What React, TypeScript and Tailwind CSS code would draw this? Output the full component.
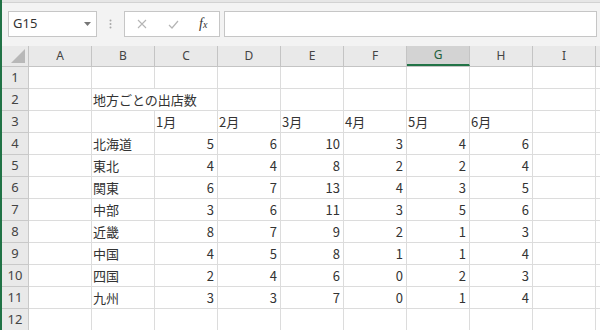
import React from 'react';

const COLS = ['A', 'B', 'C', 'D', 'E', 'F', 'G', 'H', 'I', ''];

const REGIONS: [string, number[]][] = [
  ['北海道', [5, 6, 10, 3, 4, 6]],
  ['東北', [4, 4, 8, 2, 2, 4]],
  ['関東', [6, 7, 13, 4, 3, 5]],
  ['中部', [3, 6, 11, 3, 5, 6]],
  ['近畿', [8, 7, 9, 2, 1, 3]],
  ['中国', [4, 5, 8, 1, 1, 4]],
  ['四国', [2, 4, 6, 0, 2, 3]],
  ['九州', [3, 3, 7, 0, 1, 4]],
];

type Cell = { text?: string | number; align?: 'left' | 'right'; spill?: boolean };

function buildRows(): Cell[][] {
  const rows: Cell[][] = [];
  const empty = () => COLS.map(() => ({} as Cell));
  rows.push(empty());
  const r2 = empty();
  r2[1] = { text: '地方ごとの出店数', spill: true };
  rows.push(r2);
  const r3 = empty();
  ['1月', '2月', '3月', '4月', '5月', '6月'].forEach((m, i) => (r3[i + 2] = { text: m }));
  rows.push(r3);
  REGIONS.forEach(([name, nums]) => {
    const r = empty();
    r[1] = { text: name };
    nums.forEach((n, i) => (r[i + 2] = { text: n, align: 'right' }));
    rows.push(r);
  });
  rows.push(empty());
  return rows;
}

const cellFont = { fontFamily: '"Noto Sans CJK JP", "Noto Sans", sans-serif' };

export default function App() {
  const rows = buildRows();
  return (
    <div className="w-[600px] h-[330px] overflow-hidden bg-white flex border-l-2 border-[#217346]">
      <div className="flex-1 flex flex-col min-w-0">
        {/* ribbon edge */}
        <div className="h-[3px] bg-[#e6e6e6] border-b border-[#d2d2d2] shrink-0" />

        {/* formula bar */}
        <div className="h-[43px] shrink-0 bg-[#f3f3f3] flex items-start pt-[8px] pl-[6px] pr-[3px]">
          <div className="w-[89px] h-[26px] bg-white border border-[#c6c6c6] flex items-center justify-between pl-[4px] pr-[5px]">
            <span className="text-[13px] text-[#333]" style={{ fontFamily: '"Noto Sans", sans-serif' }}>G15</span>
            <svg width="7" height="4" viewBox="0 0 7 4"><path d="M0 0h7L3.5 4z" fill="#777" /></svg>
          </div>
          <div className="w-[27px] h-[26px] flex items-center justify-center">
            <svg width="3" height="10" viewBox="0 0 3 10">
              <circle cx="1.5" cy="1.5" r="1" fill="#a8a8a8" />
              <circle cx="1.5" cy="5" r="1" fill="#a8a8a8" />
              <circle cx="1.5" cy="8.5" r="1" fill="#a8a8a8" />
            </svg>
          </div>
          <div className="w-[96px] h-[26px] bg-white border border-[#c6c6c6] flex items-center pl-[11px]">
            <svg width="10" height="10" viewBox="0 0 10 10" className="ml-[1px]">
              <path d="M1 1l8 8M9 1l-8 8" stroke="#b5b5b5" strokeWidth="1.1" />
            </svg>
            <svg width="11" height="9" viewBox="0 0 11 9" className="ml-[21px]">
              <path d="M1 5l3 3 6-7" stroke="#b5b5b5" strokeWidth="1.2" fill="none" />
            </svg>
            <span className="ml-[20px] text-[14px] italic text-[#333] leading-none" style={{ fontFamily: '"Liberation Serif", serif' }}>
              f<span className="text-[10px]">x</span>
            </span>
          </div>
          <div className="flex-1 h-[26px] bg-white border border-[#c6c6c6] ml-[4px]" />
        </div>

        {/* column headers */}
        <div className="h-[21px] shrink-0 flex bg-[#e9e9e9] border-b border-[#c4c4c4]">
          <div className="w-[27px] shrink-0 border-r border-[#c4c4c4] relative">
            <svg width="14" height="14" viewBox="0 0 14 14" className="absolute right-[3px] bottom-[3px]">
              <path d="M14 0V14H0z" fill="#b8b8b8" />
            </svg>
          </div>
          {COLS.map((c, i) => (
            <div
              key={i}
              className={
                c === 'G'
                  ? 'w-[63px] shrink-0 border-r border-[#c4c4c4] bg-[#d3d3d3] border-b-2 border-b-[#217346] flex items-center justify-center text-[12px] text-[#215f3c]'
                  : 'w-[63px] shrink-0 border-r border-[#c4c4c4] flex items-center justify-center text-[12px] text-[#444]'
              }
              style={{ fontFamily: '"Noto Sans", sans-serif' }}
            >
              {c}
            </div>
          ))}
        </div>

        {/* grid */}
        <div className="flex flex-col">
          {rows.map((row, ri) => (
            <div key={ri} className="h-[22px] shrink-0 flex">
              <div
                className="w-[27px] shrink-0 bg-[#e9e9e9] border-r border-b border-[#c9c9c9] flex items-center justify-center text-[13px] text-[#444]"
                style={{ fontFamily: '"Noto Sans", sans-serif' }}
              >
                {ri + 1}
              </div>
              {row.map((cell, ci) => (
                <div
                  key={ci}
                  className={
                    cell.spill
                      ? 'w-[63px] shrink-0 border-b border-[#dcdcdc] flex items-center whitespace-nowrap overflow-visible pl-[1px] text-[13px] text-[#333]'
                      : cell.align === 'right'
                      ? 'w-[63px] shrink-0 border-r border-b border-[#dcdcdc] flex items-center justify-end pr-[3px] text-[13px] text-[#333]'
                      : 'w-[63px] shrink-0 border-r border-b border-[#dcdcdc] flex items-center pl-[1px] text-[13px] text-[#333]'
                  }
                  style={cellFont}
                >
                  {cell.text}
                </div>
              ))}
            </div>
          ))}
        </div>
      </div>
    </div>
  );
}
